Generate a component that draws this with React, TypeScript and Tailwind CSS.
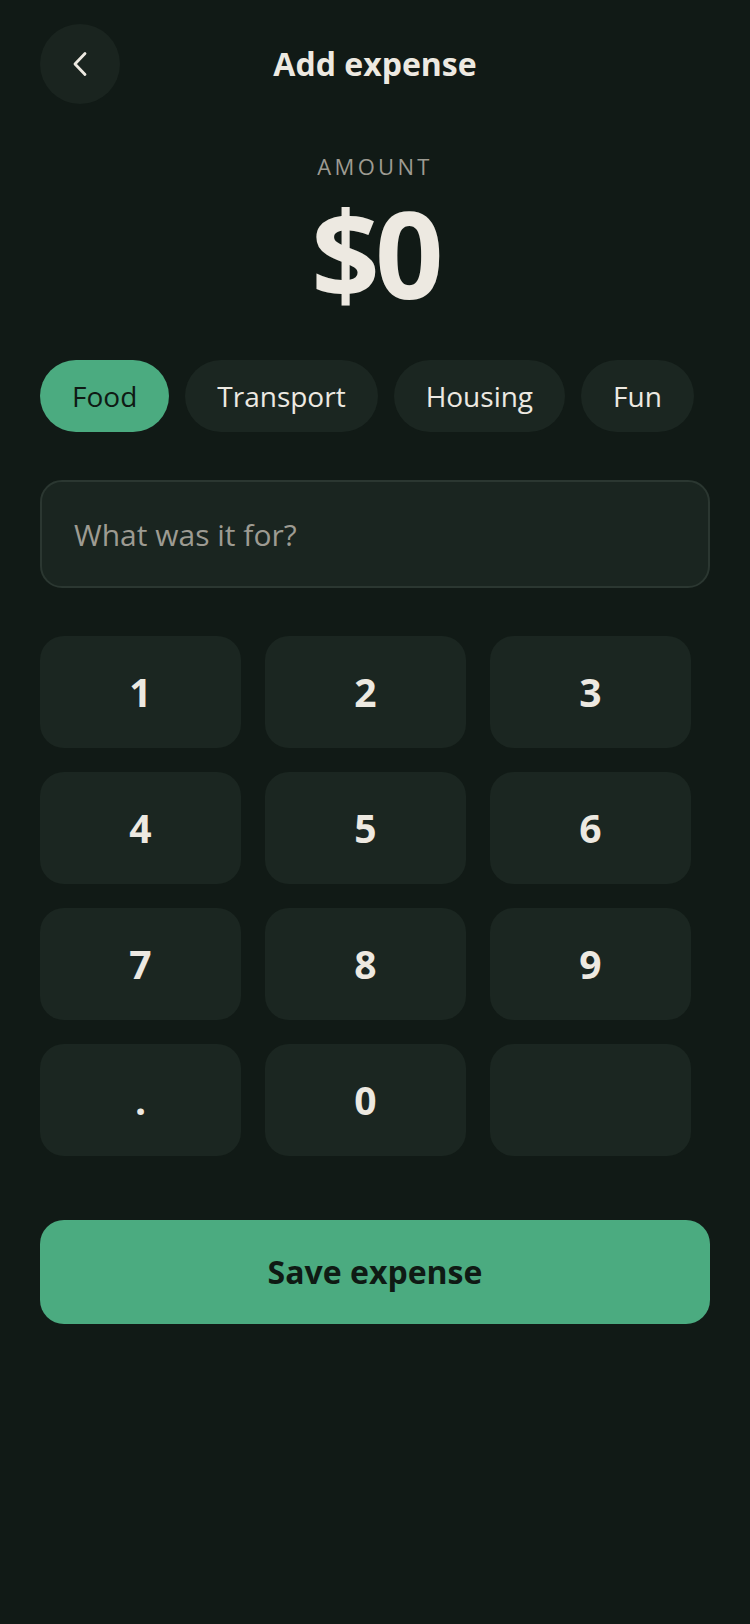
import { useState } from 'react';

const categories = ['Food', 'Transport', 'Housing', 'Fun'];
const keys = ['1', '2', '3', '4', '5', '6', '7', '8', '9', '.', '0', ''];

export default function App() {
  const [category, setCategory] = useState('Food');
  const [amount, setAmount] = useState('0');
  const [note, setNote] = useState('');

  const press = (k: string) => {
    if (!k) return;
    setAmount((prev) => {
      if (k === '.' && prev.includes('.')) return prev;
      if (prev === '0' && k !== '.') return k;
      return prev + k;
    });
  };

  return (
    <div
      className="min-h-screen w-[750px] bg-[#111a16] px-10 text-[#ede9e1]"
      style={{ fontFamily: '"Open Sans", "Noto Sans", sans-serif' }}
    >
      {/* Header */}
      <div className="grid grid-cols-[80px_1fr_80px] items-center pt-6">
        <button className="flex h-20 w-20 items-center justify-center rounded-full bg-[#1a241f]">
          <svg width="16" height="26" viewBox="0 0 16 26" fill="none">
            <path d="M13 2.5 L3 13 L13 23.5" stroke="#ede9e1" strokeWidth="2.8" strokeLinecap="round" strokeLinejoin="round" />
          </svg>
        </button>
        <h1 className="text-center text-[32px] font-bold leading-none">Add expense</h1>
        <div />
      </div>

      {/* Amount */}
      <div className="mt-[47px] text-center text-[22px] leading-[30px] tracking-[0.15em] text-[#9d9b92]">AMOUNT</div>
      <div className="mt-[6px] text-center text-[120px] font-bold leading-[132px] tracking-[-0.04em]">${amount}</div>

      {/* Categories */}
      <div className="mt-[41px] flex gap-4">
        {categories.map((c) => (
          <button
            key={c}
            onClick={() => setCategory(c)}
            className={
              c === category
                ? 'h-[72px] rounded-full bg-[#4bab80] px-8 text-[28px] text-[#0f1a14]'
                : 'h-[72px] rounded-full bg-[#1b2621] px-8 text-[28px] text-[#ede9e1]'
            }
          >
            {c}
          </button>
        ))}
      </div>

      {/* Note */}
      <input
        value={note}
        onChange={(e) => setNote(e.target.value)}
        placeholder="What was it for?"
        className="mt-12 h-[108px] w-full rounded-[22px] border-2 border-[#2b3731] bg-[#1a2520] px-8 text-[30px] text-[#ede9e1] outline-none placeholder:text-[#9d9b92]"
      />

      {/* Keypad */}
      <div className="mt-12 grid grid-cols-[repeat(3,201px)] gap-6">
        {keys.map((k, i) => (
          <button
            key={i}
            onClick={() => press(k)}
            className="flex h-[112px] items-center justify-center rounded-3xl bg-[#1b2621] text-[39px] font-bold"
          >
            {k}
          </button>
        ))}
      </div>

      {/* Save */}
      <button className="mt-16 flex h-[104px] w-full items-center justify-center rounded-3xl bg-[#4bab80] text-[32px] font-bold text-[#0f1a14]">
        Save expense
      </button>
    </div>
  );
}
